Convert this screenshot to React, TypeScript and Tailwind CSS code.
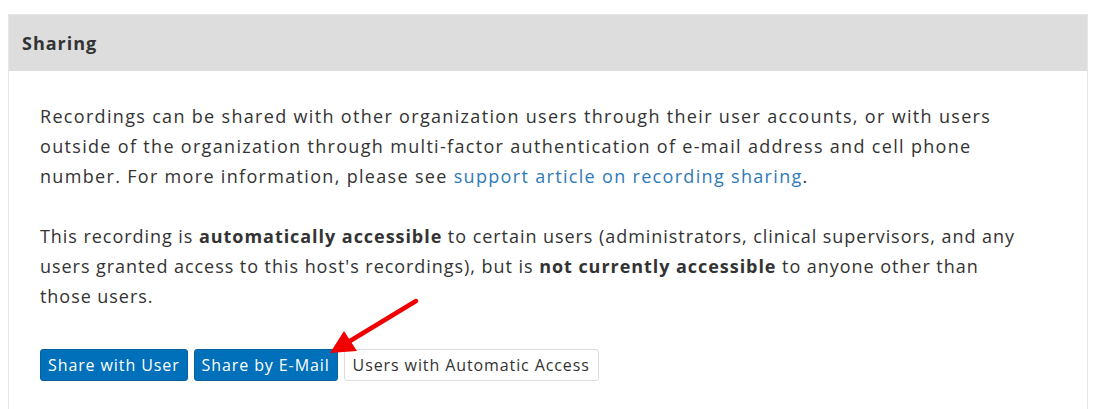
import React from "react";

export default function App() {
  return (
    <div className="relative w-[1093px] h-[409px] bg-white overflow-hidden" style={{ fontFamily: '"Open Sans", "Liberation Sans", sans-serif' }}>
      <div className="ml-2 mt-[14px] w-[1080px] border border-[#e6e6e6] border-b-0 h-[395px]">
        <div className="h-[56px] bg-[#dddddd] flex items-center px-[13px]">
          <h2 className="text-[18px] font-bold text-[#333333] tracking-[1px]">Sharing</h2>
        </div>
        <div className="pl-[31px] pr-[10px] pt-[30px] text-[18px] leading-[30px] text-[#333333] whitespace-nowrap">
          <p className="tracking-[1.32px]">
            Recordings can be shared with other organization users through their user accounts, or with users<br />
            outside of the organization through multi-factor authentication of e-mail address and cell phone<br />
            number. For more information, please see{" "}
            <a className="text-[#2f7ab8]">support article on recording sharing</a>.
          </p>
          <p className="mt-[30px] tracking-[0.95px]">
            This recording is <b>automatically accessible</b> to certain users (administrators, clinical supervisors, and any<br />
            users granted access to this host's recordings), but is <b>not currently accessible</b> to anyone other than<br />
            those users.
          </p>
          <div className="mt-[38px] flex gap-[6px] tracking-[0.9px]">
            <button className="h-[32px] px-[7px] rounded-[3px] bg-[#0070ba] border border-[#0a5f9e] text-white text-[16px]">Share with User</button>
            <button className="h-[32px] px-[7px] rounded-[3px] bg-[#0070ba] border border-[#0a5f9e] text-white text-[16px]">Share by E-Mail</button>
            <button className="h-[32px] px-[8px] rounded-[3px] bg-white border border-[#dddddd] text-[#333333] text-[16px]">Users with Automatic Access</button>
          </div>
        </div>
      </div>
      <svg className="absolute left-[312px] top-[276px]" width="120" height="80" viewBox="312 276 120 80">
        <line x1="416" y1="301" x2="345" y2="344" stroke="#f00000" strokeWidth="4.5" strokeLinecap="round" />
        <polygon points="330,353 344,331 357,351" fill="#f00000" />
      </svg>
    </div>
  );
}
